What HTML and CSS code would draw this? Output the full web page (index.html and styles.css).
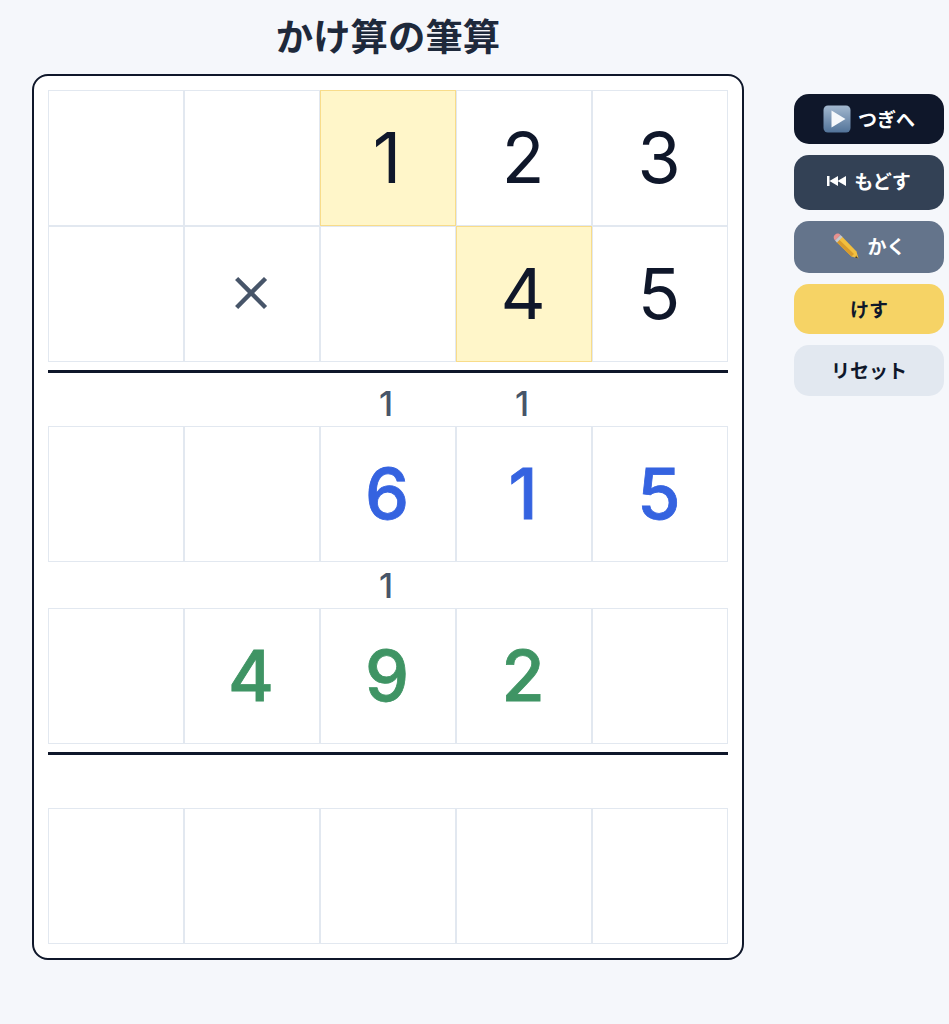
FILE: index.html
```html
<!DOCTYPE html>
<html lang="ja">
<head>
<meta charset="utf-8">
<title>かけ算の筆算</title>
<link rel="stylesheet" href="styles.css">
</head>
<body>
<div class="page">
  <main class="left">
    <h1 class="title">かけ算の筆算</h1>
    <div class="card">
      <div class="row">
        <div class="cell"></div><div class="cell"></div>
        <div class="cell hl">1</div><div class="cell">2</div><div class="cell">3</div>
      </div>
      <div class="row">
        <div class="cell"></div><div class="cell op">×</div>
        <div class="cell"></div><div class="cell hl">4</div><div class="cell">5</div>
      </div>
      <div class="rule"></div>
      <div class="row carries">
        <div class="carry"></div><div class="carry"></div>
        <div class="carry">1</div><div class="carry">1</div><div class="carry"></div>
      </div>
      <div class="row blue">
        <div class="cell"></div><div class="cell"></div>
        <div class="cell">6</div><div class="cell">1</div><div class="cell">5</div>
      </div>
      <div class="row carries mid">
        <div class="carry"></div><div class="carry"></div>
        <div class="carry">1</div><div class="carry"></div><div class="carry"></div>
      </div>
      <div class="row green">
        <div class="cell"></div><div class="cell">4</div>
        <div class="cell">9</div><div class="cell">2</div><div class="cell"></div>
      </div>
      <div class="rule"></div>
      <div class="row carries">
        <div class="carry"></div><div class="carry"></div>
        <div class="carry"></div><div class="carry"></div><div class="carry"></div>
      </div>
      <div class="row">
        <div class="cell"></div><div class="cell"></div>
        <div class="cell"></div><div class="cell"></div><div class="cell"></div>
      </div>
    </div>
  </main>
  <aside class="side">
    <button class="btn next">
      <svg class="emoji" viewBox="0 0 28 28" aria-hidden="true">
        <defs><linearGradient id="blueBox" x1="0" y1="0" x2="0" y2="1"><stop offset="0" stop-color="#a3b8cf"/><stop offset="1" stop-color="#527399"/></linearGradient></defs>
        <rect x="0.500" y="0.500" width="27" height="27" rx="4.500" fill="url(#blueBox)"/>
        <path d="M8.500 5.500 L22.500 14 L8.500 22.500 Z" fill="#f6f8fb"/>
      </svg>つぎへ
    </button>
    <button class="btn back">
      <svg class="skip" viewBox="0 0 19 10" aria-hidden="true">
        <path d="M0 0 H2.500 V10 H0 Z M11 0 V10 L2.500 5 Z M19 0 V10 L10.500 5 Z" fill="#fff"/>
      </svg>もどす
    </button>
    <button class="btn write">
      <svg class="emoji" viewBox="0 0 28 28" aria-hidden="true">
        <path d="M9.500 4 L4 9.500 L19.500 24.500 L26.500 26.500 L24.500 19.500 Z" fill="#f2bf3e"/>
        <path d="M4 9.500 L6.500 7 L22 22 L19.500 24.500 Z" fill="#d89b2c"/>
        <path d="M3 8.500 C1 6 1.500 4 3 2.800 C4.500 1.300 6.500 1 8.500 3 Z" fill="#e8918f"/>
        <path d="M3 8.500 L8.500 3 L10.500 5 L5 10.500 Z" fill="#c4c7cc"/>
        <path d="M24 24 L26.500 26.500 L23 25.500 L25 23 Z" fill="#35302c"/>
      </svg>かく
    </button>
    <button class="btn erase">けす</button>
    <button class="btn reset">リセット</button>
  </aside>
</div>
</body>
</html>
```

FILE: styles.css
```css
* { box-sizing: border-box; }
html, body { margin: 0; padding: 0; }
body {
  background: #f5f7fb;
  color: #0f172a;
  font-family: "Noto Sans CJK JP", "Noto Sans", sans-serif;
  height: 1024px;
  overflow: hidden;
}
.page {
  display: flex;
  align-items: flex-start;
  padding-left: 32px;
}
.left { width: 712px; }
.title {
  margin: 0;
  height: 74px;
  padding-top: 10px;
  text-align: center;
  font-size: 37.4px;
  line-height: 50px;
  font-weight: 700;
  color: #1e293b;
}
.card {
  background: #fff;
  border: 2px solid #0f172a;
  border-radius: 16px;
  padding: 14px;
  width: 712px;
  height: 886px;
}
.row { display: flex; }
.cell {
  width: 136px;
  height: 136px;
  border: 1px solid #e2e8f0;
  padding-right: 2px;
  display: flex;
  align-items: center;
  justify-content: center;
  font-family: Inter, "Noto Sans", sans-serif;
  font-size: 70px;
  line-height: 1;
  color: #0f172a;
}
.hl { background: #fff6c9; border-color: #f8dc8a; }
.op { color: #475569; font-size: 72px; font-weight: 300; padding-bottom: 14px; }
.blue .cell { color: #3563e0; font-weight: 500; -webkit-text-stroke: 0.8px #3563e0; }
.green .cell { color: #3f9464; font-weight: 500; -webkit-text-stroke: 0.8px #3f9464; }
.rule { height: 3px; background: #0f172a; margin: 8px 0; }
.carries { height: 45px; }
.carries.mid { height: 46px; }
.carry {
  width: 136px;
  padding-right: 4px;
  display: flex;
  align-items: center;
  justify-content: center;
  font-family: Inter, "Noto Sans", sans-serif;
  font-size: 34px;
  font-weight: 500;
  color: #475569;
}
.side {
  margin-left: 50px;
  width: 150px;
  padding-top: 94px;
  display: flex;
  flex-direction: column;
  gap: 11px;
}
.btn {
  width: 150px;
  height: 51px;
  border: 0;
  border-radius: 15px;
  padding: 0 0 2px;
  display: flex;
  align-items: center;
  justify-content: center;
  font-family: inherit;
  font-size: 19px;
  font-weight: 700;
  color: #fff;
}
.emoji { width: 28px; height: 28px; margin-right: 7px; }
.skip { width: 19px; height: 10px; margin-right: 8px; }
.next { background: #0f172a; height: 50px; }
.next .emoji { margin-top: 2px; }
.back { background: #334155; height: 55px; padding-bottom: 4px; }
.write { background: #64748b; height: 52px; padding-bottom: 3px; }
.erase { background: #f6d365; color: #0f172a; height: 50px; }
.reset { background: #e2e8f0; color: #0f172a; }
```
